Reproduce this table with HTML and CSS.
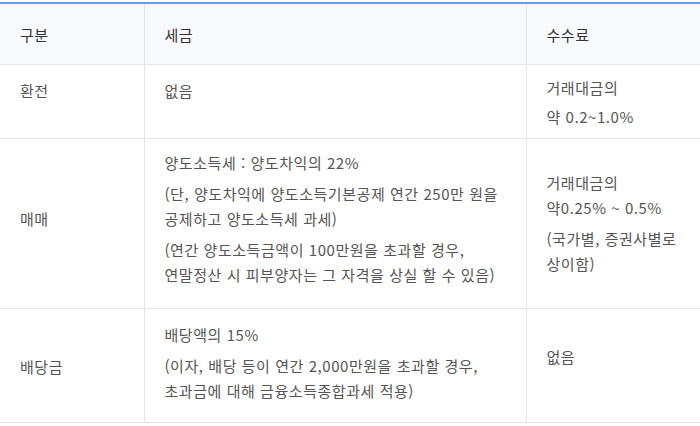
FILE: index.html
```html
<!DOCTYPE html>
<html lang="ko">
<head>
<meta charset="utf-8">
<link rel="stylesheet" href="styles.css">
</head>
<body>
<table class="tax">
  <colgroup>
    <col class="c1"><col class="c2"><col class="c3">
  </colgroup>
  <thead>
    <tr><th>구분</th><th>세금</th><th>수수료</th></tr>
  </thead>
  <tbody>
    <tr class="r1">
      <td class="top t1">환전</td>
      <td class="top t1">없음</td>
      <td class="top t2"><p>거래대금의</p><p class="gap4">약 0.2~1.0%</p></td>
    </tr>
    <tr class="r2">
      <td class="mid">매매</td>
      <td class="mid">
        <p>양도소득세 : 양도차익의 22%</p>
        <p class="gap">(단, 양도차익에 양도소득기본공제 연간 250만 원을 공제하고 양도소득세 과세)</p>
        <p class="gap">(연간 양도소득금액이 100만원을 초과할 경우,<br>연말정산 시 피부양자는 그 자격을 상실 할 수 있음)</p>
      </td>
      <td class="mid shift"><p>거래대금의<br>약0.25% ~ 0.5%</p><p class="gap">(국가별, 증권사별로 상이함)</p></td>
    </tr>
    <tr class="r3">
      <td class="mid low">배당금</td>
      <td class="mid">
        <p>배당액의 15%</p>
        <p class="gap">(이자, 배당 등이 연간 2,000만원을 초과할 경우,<br>초과금에 대해 금융소득종합과세 적용)</p>
      </td>
      <td class="mid high">없음</td>
    </tr>
  </tbody>
</table>
</body>
</html>
```
FILE: styles.css
```css
html, body {
  margin: 0;
  padding: 0;
  background: #fff;
}
body {
  padding-top: 2px;
  font-family: "Noto Sans CJK KR", "Noto Sans", sans-serif;
  font-size: 15px;
  line-height: 25px;
  letter-spacing: 0.55px;
  color: #555;
}
.tax {
  width: 700px;
  table-layout: fixed;
  border-collapse: collapse;
  border-top: 2px solid #6a9ae6;
}
.c1 { width: 144px; }
.c2 { width: 382px; }
.c3 { width: 174px; }
.tax th {
  background: #f8f9fc;
  color: #333;
  font-weight: 400;
  text-align: left;
  padding: 18px 20px 17px;
  border-bottom: 1px solid #e3e5ea;
}
.tax th + th, .tax td + td {
  border-left: 1px solid #e3e5ea;
}
.tax td {
  padding: 11px 20px 21px;
  border-bottom: 1px solid #e3e5ea;
}
.tax p { margin: 0; }
.tax p.gap { margin-top: 6px; }
.tax p.gap4 { margin-top: 4px; }
.top { vertical-align: top; }
.mid { vertical-align: middle; }
.t1 { padding-top: 13px !important; }
.t2 { padding-top: 10px !important; padding-bottom: 9px !important; }
.shift { padding-top: 19px !important; }
.low { padding-top: 21px !important; }
.high { padding-bottom: 31px !important; }
.r3 td { padding-top: 13px; padding-bottom: 19px; }
```
